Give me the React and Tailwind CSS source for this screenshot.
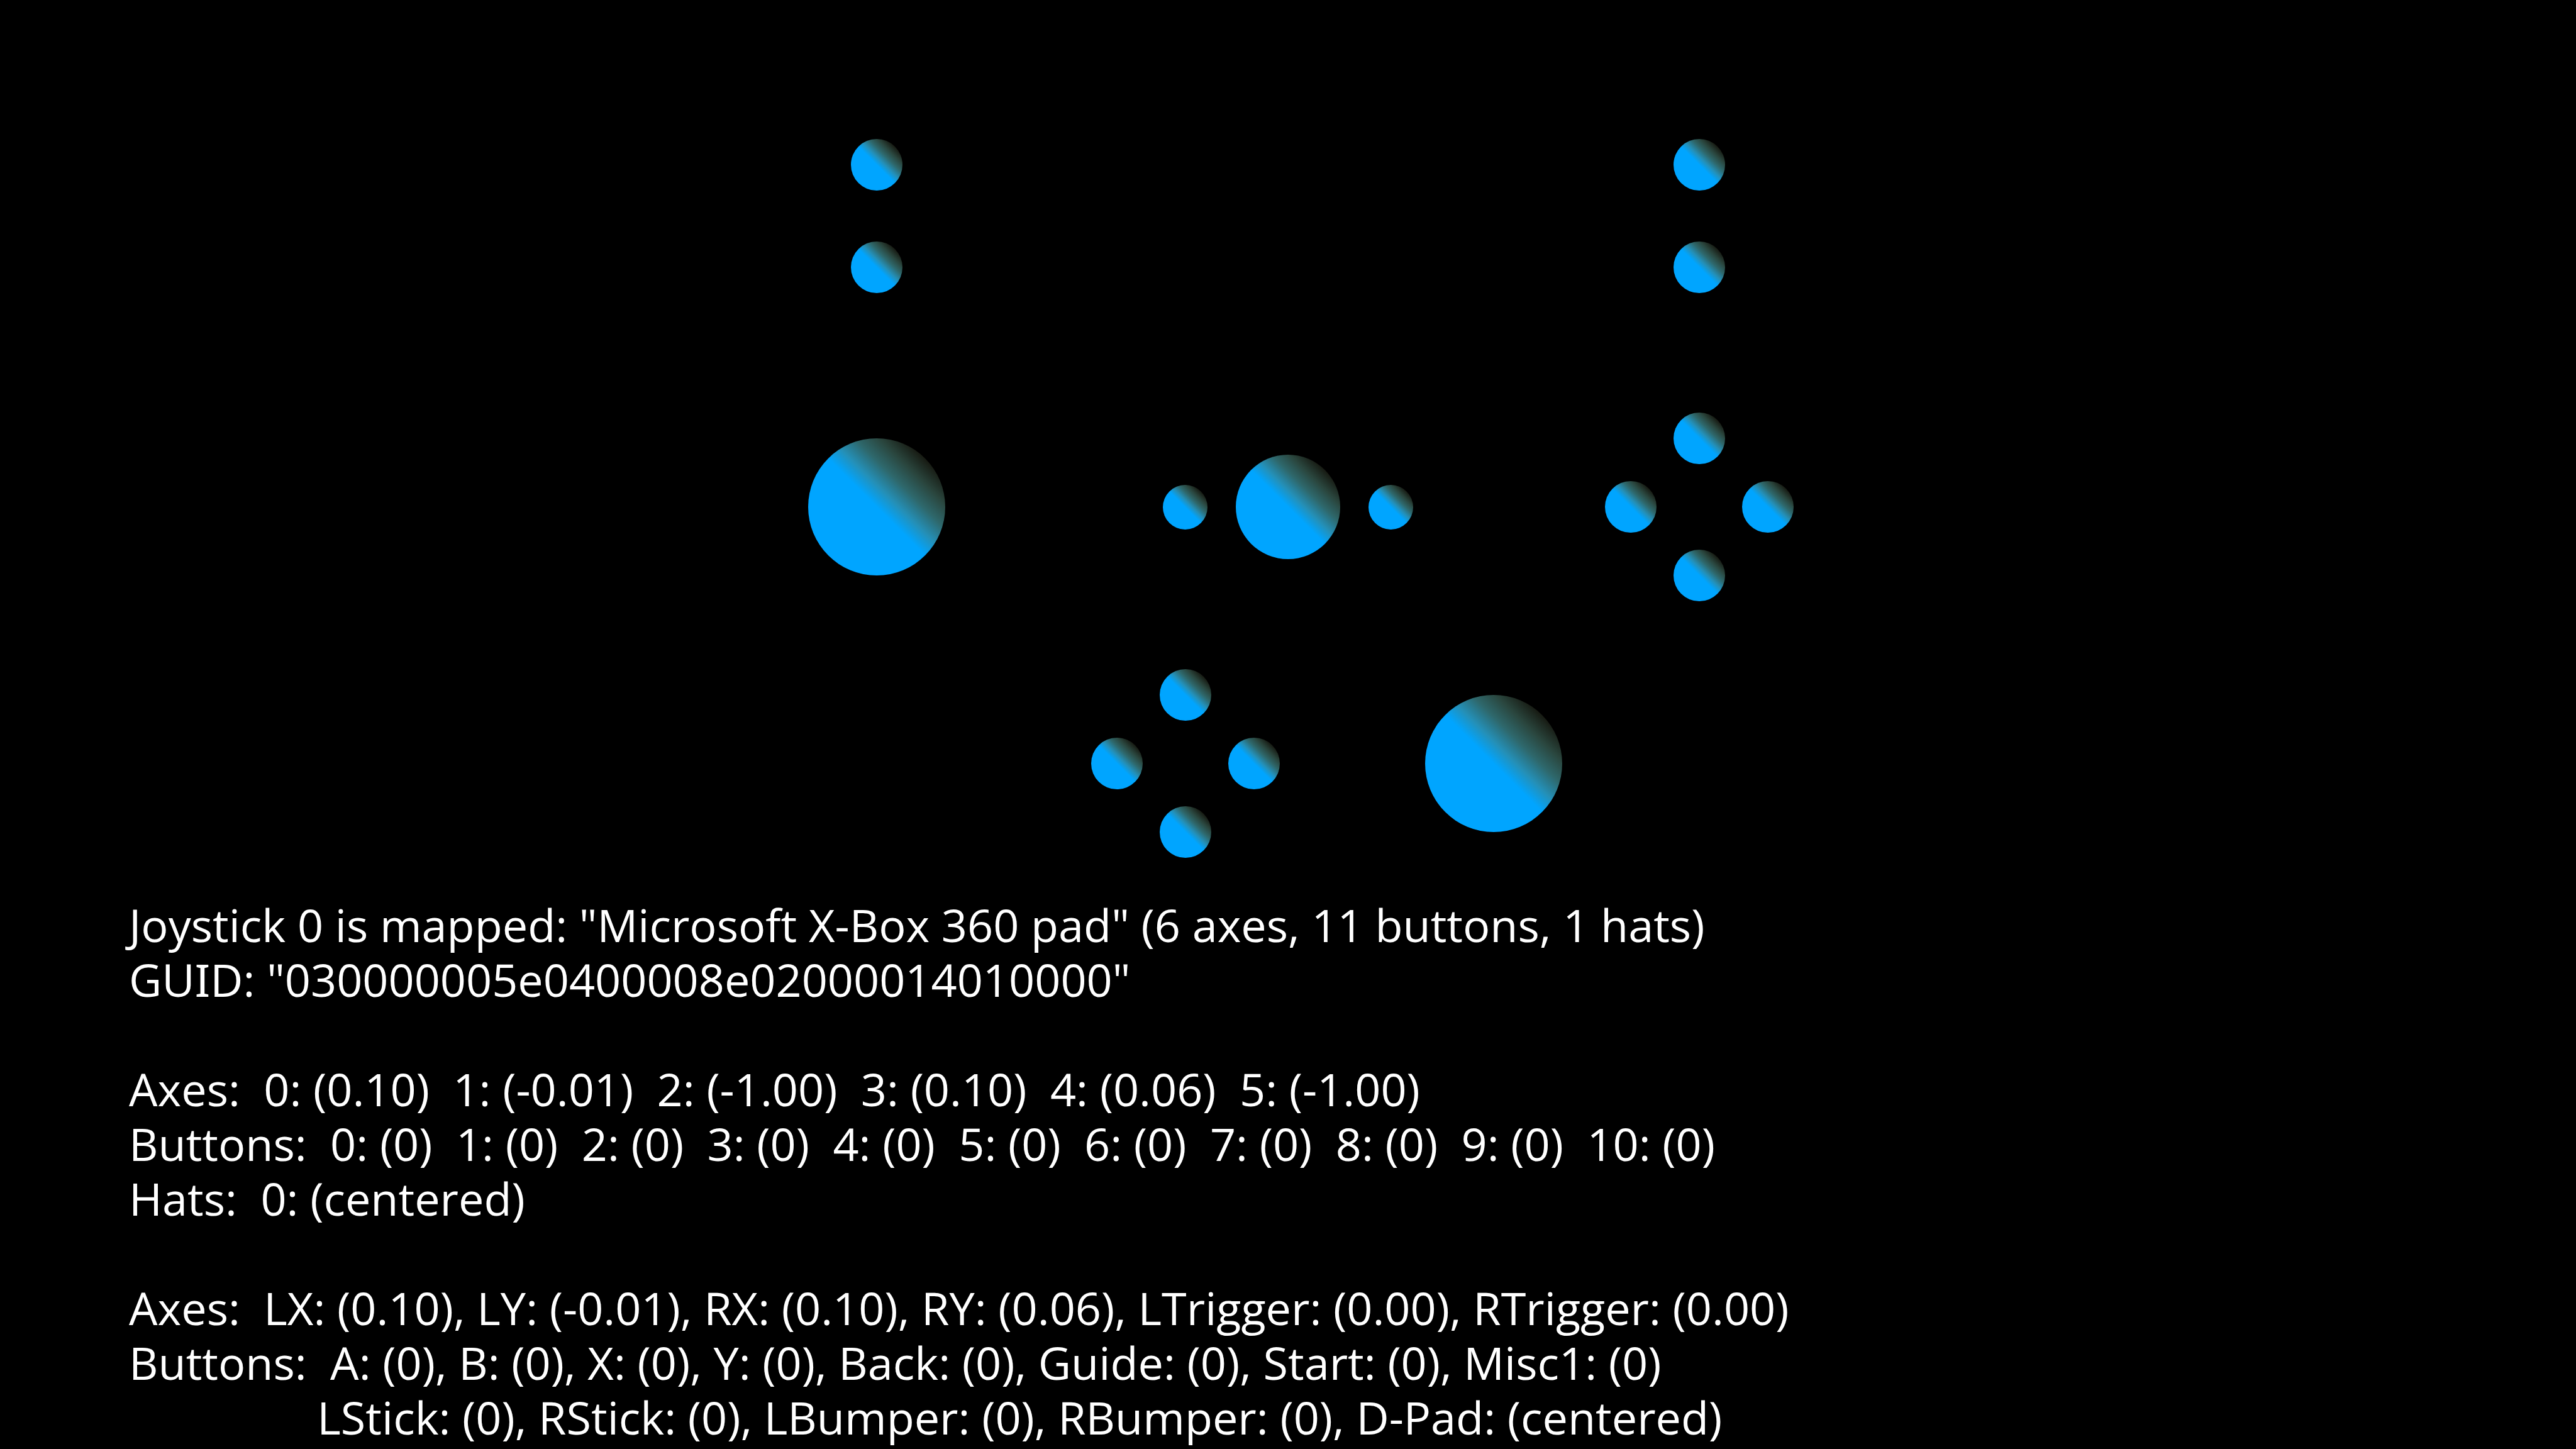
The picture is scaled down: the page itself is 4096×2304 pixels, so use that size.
const sizes = {
  stick: 'size-[218px]',
  guide: 'size-[166px]',
  menu: 'size-[71px]',
  button: 'size-[82px]',
};

function Dot({ size = 'button', label, className = '' }) {
  return (
    <div
      role="img"
      aria-label={label}
      className={`${sizes[size]} shrink-0 rounded-full bg-[linear-gradient(45deg,#00a5ff_50%,#2490b8_58%,#2e686c_67%,#2a463e_76%,#181c14_85%,#000000_100%)] ${className}`}
    />
  );
}

/* Four buttons in a diamond: top, left, right, bottom. */
function Diamond({ labels }) {
  const [top, left, right, bottom] = labels;
  return (
    <div className="flex flex-col items-center">
      <Dot label={top} />
      <div className="-my-[27px] flex h-[190px] items-center gap-[136px]">
        <Dot label={left} />
        <Dot label={right} />
      </div>
      <Dot label={bottom} />
    </div>
  );
}

function Shoulder({ labels, className = '' }) {
  return (
    <div className={`col-span-4 flex flex-col items-center gap-[81px] ${className}`}>
      {labels.map((label) => (
        <Dot key={label} label={label} />
      ))}
    </div>
  );
}

function Line({ children }) {
  return <p className="min-h-[87px] whitespace-pre">{children}</p>;
}

export default function App() {
  return (
    <main className="min-h-screen overflow-hidden bg-black text-white">
      <section
        aria-label="Gamepad"
        className="mx-auto grid w-full max-w-[1962px] grid-cols-12 items-center justify-items-center pt-[221px]"
      >
        <Shoulder labels={['Left trigger', 'Left bumper']} />
        <Shoulder labels={['Right trigger', 'Right bumper']} className="col-start-9" />

        <div className="col-span-4 mt-[190px]">
          <Dot size="stick" label="Left stick" />
        </div>
        <div className="col-span-4 mt-[190px] flex items-center gap-[45px]">
          <Dot size="menu" label="Back" />
          <Dot size="guide" label="Guide" />
          <Dot size="menu" label="Start" />
        </div>
        <div className="col-span-4 mt-[190px]">
          <Diamond labels={['Y', 'X', 'B', 'A']} />
        </div>

        <div className="col-span-4 col-start-4 mt-[108px]">
          <Diamond labels={['D-Pad up', 'D-Pad left', 'D-Pad right', 'D-Pad down']} />
        </div>
        <div className="col-span-2 col-start-8 mt-[108px]">
          <Dot size="stick" label="Right stick" />
        </div>
      </section>

      <section
        aria-label="Joystick state"
        className="mt-[63px] pl-[205px] font-['Open_Sans',sans-serif] text-[72px] leading-[87px]"
      >
        <Line>{'Joystick 0 is mapped: "Microsoft X-Box 360 pad" (6 axes, 11 buttons, 1 hats)'}</Line>
        <Line>
          GU<span className="font-['Noto_Sans',sans-serif]">I</span>
          {'D: "030000005e0400008e02000014010000"'}
        </Line>
        <Line />
        <Line>{'Axes:  0: (0.10)  1: (-0.01)  2: (-1.00)  3: (0.10)  4: (0.06)  5: (-1.00)'}</Line>
        <Line>{'Buttons:  0: (0)  1: (0)  2: (0)  3: (0)  4: (0)  5: (0)  6: (0)  7: (0)  8: (0)  9: (0)  10: (0)'}</Line>
        <Line>{'Hats:  0: (centered)'}</Line>
        <Line />
        <Line>{'Axes:  LX: (0.10), LY: (-0.01), RX: (0.10), RY: (0.06), LTrigger: (0.00), RTrigger: (0.00)'}</Line>
        <Line>{'Buttons:  A: (0), B: (0), X: (0), Y: (0), Back: (0), Guide: (0), Start: (0), Misc1: (0)'}</Line>
        <Line>{'                LStick: (0), RStick: (0), LBumper: (0), RBumper: (0), D-Pad: (centered)'}</Line>
      </section>
    </main>
  );
}
